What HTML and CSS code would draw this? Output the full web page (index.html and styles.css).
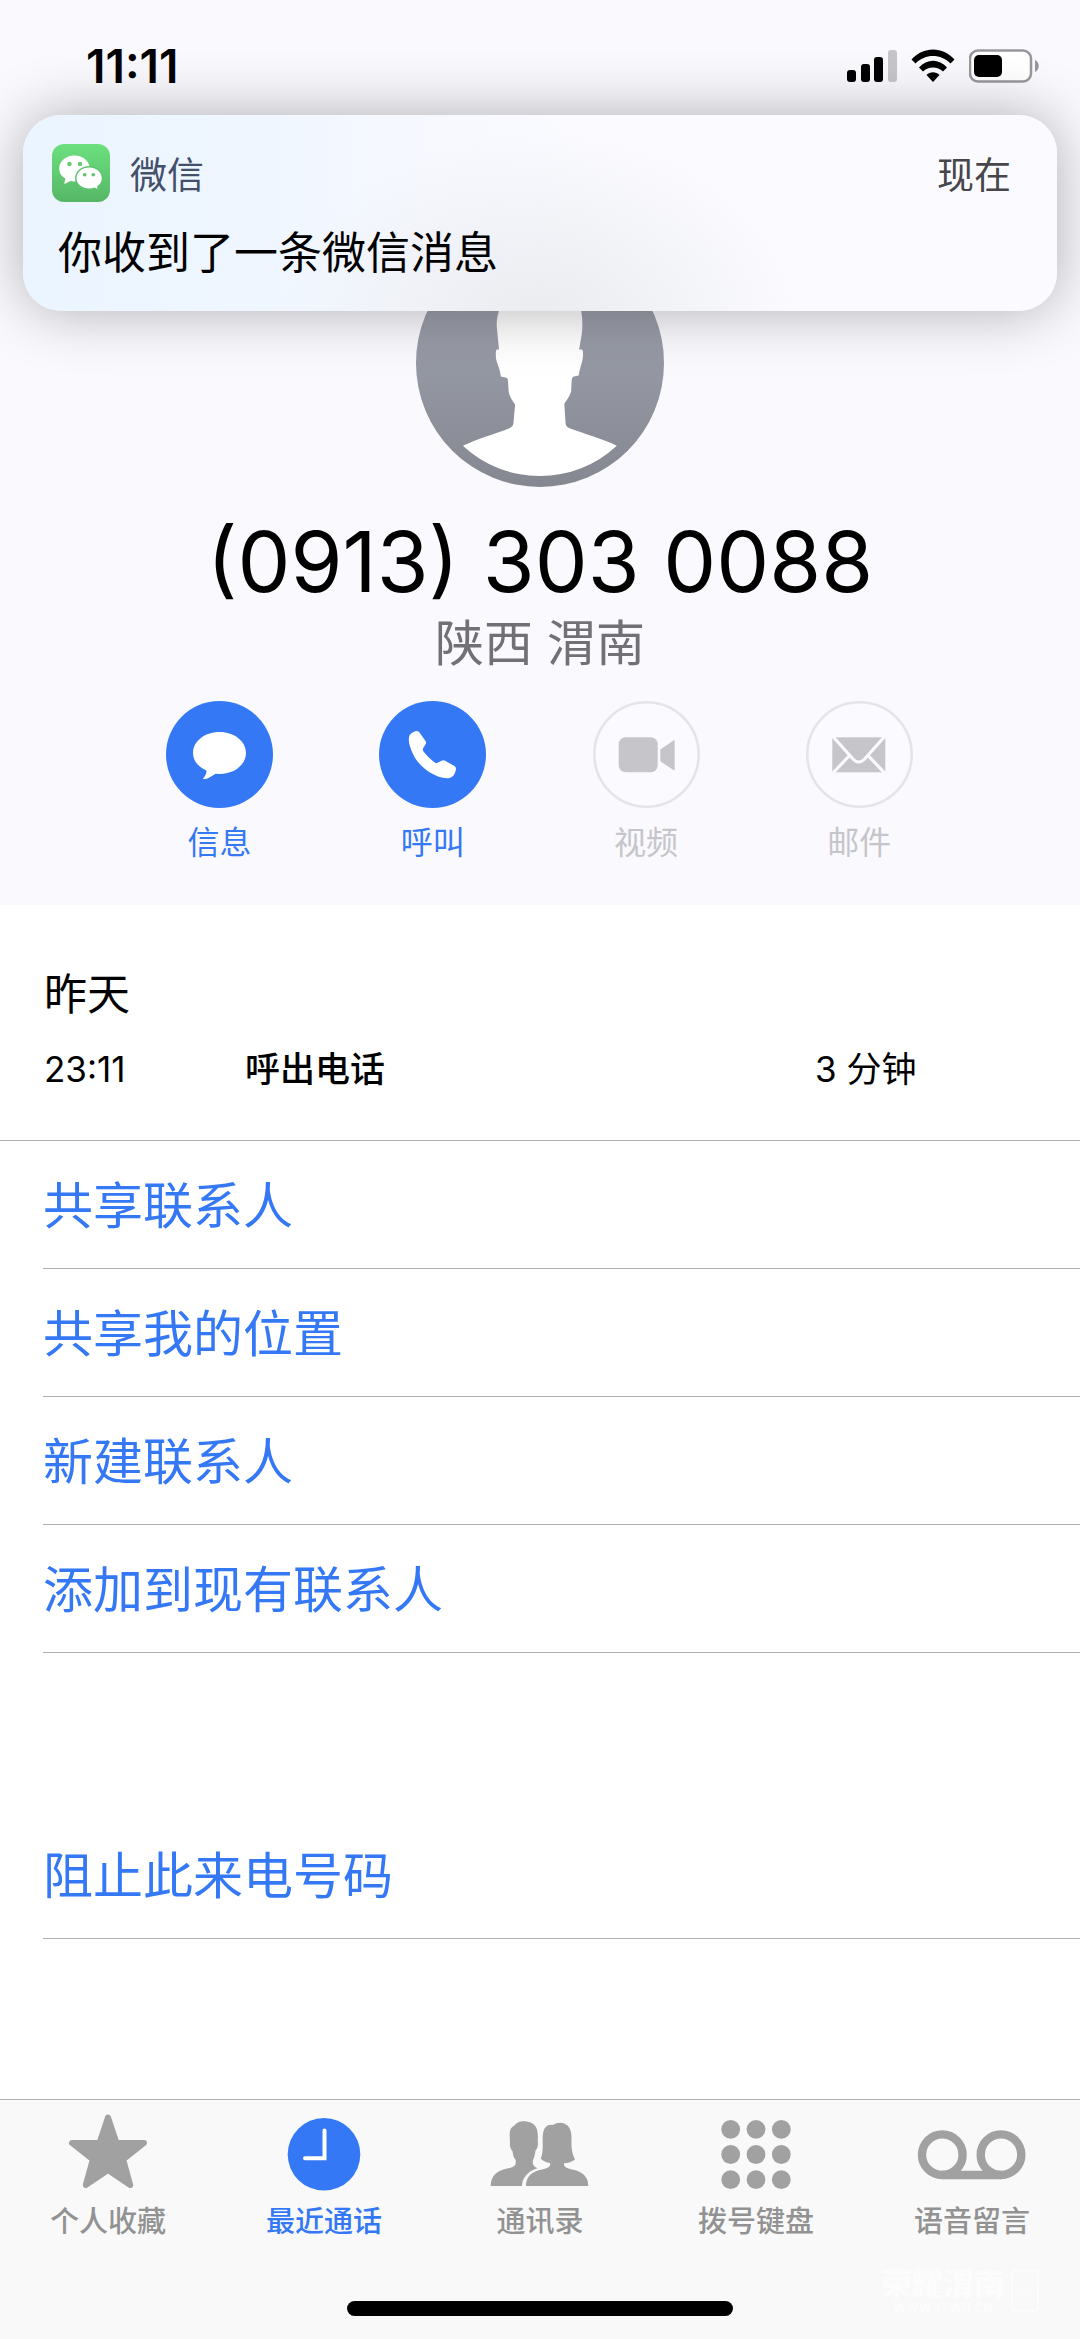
FILE: index.html
```html
<!DOCTYPE html>
<html lang="zh-CN">
<head>
    <meta charset="UTF-8">
    <meta name="viewport" content="width=device-width, initial-scale=1.0">
    <title>最近通话</title>
    <link rel="stylesheet" href="styles.css">
</head>
<body>
    <div class="phone">
        <header class="contact-header">
            <div class="status-bar">
                <span class="status-time">11:11</span>
                <div class="status-icons">
                    <svg width="50" height="34" viewBox="0 0 50 34" aria-hidden="true">
                        <rect x="0" y="21" width="9" height="12" rx="3"/>
                        <rect x="14" y="15" width="9" height="18" rx="3"/>
                        <rect x="27" y="8" width="9" height="25" rx="3"/>
                        <rect x="41" y="1" width="9" height="32" rx="3" fill="#c6c5ca"/>
                    </svg>
                    <svg width="44" height="34" viewBox="0 0 44 34" aria-hidden="true">
                        <path d="M0.500 10.500C12-3 32-3 43.500 10.500L39.500 14.500C30 4.500 14 4.500 4.500 14.500Z"/>
                        <path d="M8 18.500C16 9.500 28 9.500 36 18.500L32 22.500C26.500 17 17.500 17 12 22.500Z"/>
                        <path d="M15.500 26C19 22.300 25 22.300 28.500 26L22 33Z"/>
                    </svg>
                    <svg width="70" height="34" viewBox="0 0 70 34" aria-hidden="true">
                        <rect x="1" y="1.500" width="61" height="31" rx="8" fill="#fff" stroke="#98979c" stroke-width="2.500"/>
                        <rect x="5" y="6" width="28" height="22" rx="5"/>
                        <path d="M66 11C71 13 71 21 66 23Z" fill="#98979c"/>
                    </svg>
                </div>
            </div>

            <svg class="avatar" viewBox="0 0 247 247" aria-hidden="true">
                <defs>
                    <linearGradient id="avatarFill" x1="0" y1="0" x2="0" y2="1">
                        <stop offset="0" stop-color="#a5a9b5"/>
                        <stop offset="1" stop-color="#858891"/>
                    </linearGradient>
                </defs>
                <circle cx="123.500" cy="123.500" r="123.500" fill="url(#avatarFill)"/>
                <path fill="#fff" d="M82.700 71C85 40 100 26 123.500 26S162 40 164.300 71C166 78 166 88 165 95L162.500 110L165.500 110Q167 112 166 119C165 125 163 129 162 136L157 137Q155 138 155 141L154.500 152C153 157 150 161 147.700 164L149 184Q149.500 187 153 188.500C167 194 187 199 200 206A112.800 112.800 0 0 1 46.700 206C60 199 80 194 94 188Q96.500 187 97 184L98.700 165C96 161 93 157 92.300 152L91.500 140Q91 138 89 138L84.500 137C84 130 80.500 124 79.700 119Q79 111 80.500 110L82.700 110L80.500 88C80 80 81.500 76 82.700 71Z"/>
            </svg>

            <h1 class="phone-number">(0913) 303 0088</h1>
            <p class="location">陕西 渭南</p>

            <div class="actions">
                <button class="action">
                    <svg class="action-icon" viewBox="0 0 107 107" aria-hidden="true">
                        <circle cx="53.500" cy="53.500" r="53.500" fill="#3478f6"/>
                        <path fill="#fff" d="M53.500 31C68.500 31 80 40.500 80 52S68.500 73 53.500 73L49.500 72.700C46 75 42 78 37.500 78.200Q36.500 78 37.500 77C40 74 40.500 72 40.500 69.500C32 66 27 59.500 27 52C27 40.500 38.500 31 53.500 31Z"/>
                    </svg>
                    <span>信息</span>
                </button>
                <button class="action">
                    <svg class="action-icon" viewBox="0 0 107 107" aria-hidden="true">
                        <circle cx="53.500" cy="53.500" r="53.500" fill="#3478f6"/>
                        <path fill="#fff" d="M30.500 34.500C32 31.500 36 30 38 30Q39.500 30 40.500 31.500L46.500 40Q47.500 41.500 46.700 43L44 47.500Q43.500 49 44.500 50.500C48 55 52 59 56.500 62Q57.500 62.500 59 61.500L62.500 59.700Q64.500 58.800 66.500 60L75.500 65Q77.500 66.500 76.800 69C76 74 73 77 69 77.300C63 77.500 57 75 51 71.500C44 67 38 61 34.500 54C31 47 28.500 40 30.500 34.500Z"/>
                    </svg>
                    <span>呼叫</span>
                </button>
                <button class="action" disabled>
                    <svg class="action-icon" viewBox="0 0 107 107" aria-hidden="true">
                        <circle cx="53.500" cy="53.500" r="52.200" fill="#fbfafe" stroke="#e5e4e9" stroke-width="2.600"/>
                        <rect x="25.700" y="36.300" width="39" height="35" rx="7" fill="#c6c5ca"/>
                        <path fill="#c6c5ca" d="M67.300 48.500L80.500 39.500Q81.700 39 81.700 40V68.500Q81.700 69.500 80.500 69L69 61.500Q67.300 60.500 67.300 59Z"/>
                    </svg>
                    <span>视频</span>
                </button>
                <button class="action" disabled>
                    <svg class="action-icon" viewBox="0 0 107 107" aria-hidden="true">
                        <circle cx="53.500" cy="53.500" r="52.200" fill="#fbfafe" stroke="#e5e4e9" stroke-width="2.600"/>
                        <rect x="26.300" y="36.300" width="53" height="35" fill="#c6c5ca"/>
                        <path fill="none" stroke="#fbfafe" stroke-width="3.200" d="M26 34.500L47 58Q52.800 64 58.600 58L79.600 34.500M43.500 54.500L26 73M62 54.500L79.600 73"/>
                    </svg>
                    <span>邮件</span>
                </button>
            </div>
        </header>

        <main>
            <section class="call-log">
                <h2>昨天</h2>
                <table class="call-table">
                    <tbody>
                        <tr>
                            <td class="call-time">23:11</td>
                            <th class="call-type" scope="row">呼出电话</th>
                            <td class="call-duration">3 分钟</td>
                        </tr>
                    </tbody>
                </table>
            </section>

            <div class="option-list">
                <button class="option">共享联系人</button>
                <button class="option">共享我的位置</button>
                <button class="option">新建联系人</button>
                <button class="option">添加到现有联系人</button>
            </div>
            <div class="option-list">
                <button class="option">阻止此来电号码</button>
            </div>
        </main>

        <footer class="bottom-bar">
            <nav class="tabs">
                <a class="tab" href="#favorites">
                    <svg class="tab-icon" viewBox="0 0 110 80" aria-hidden="true">
                        <path fill="currentColor" stroke="currentColor" stroke-width="6" stroke-linejoin="round" d="M55 5.500L63.500 31H91L70.200 47.500L77.200 73L55 58L32.800 73L39.800 47.500L19 31H46.500Z"/>
                    </svg>
                    <span>个人收藏</span>
                </a>
                <a class="tab tab-active" href="#recents">
                    <svg class="tab-icon" viewBox="0 0 110 80" aria-hidden="true">
                        <circle cx="55" cy="42.300" r="36.300" fill="currentColor"/>
                        <path fill="none" stroke="#fff" stroke-width="4" stroke-linecap="round" d="M55.500 18.500V46.300H36"/>
                    </svg>
                    <span>最近通话</span>
                </a>
                <a class="tab" href="#contacts">
                    <svg class="tab-icon" viewBox="0 0 110 80" aria-hidden="true">
                        <path fill="currentColor" d="M5.700 74C5.700 64 12 58.500 22 56.500C28 55.500 30.500 54 30.700 51V48C28 45 28 42 27.500 39C25.500 37 24.500 34 25 30C24.500 22 24 16 29 14C33 8 41 8.500 45.500 10.500C52 13 53.500 19 52.700 29C53.500 33 52.500 37 50.500 38.500C50 43 49 46 48 48L47.700 50C48 54 50 55 52.500 56.200C43 59 37 66 37 74Z"/>
                        <path fill="currentColor" d="M41 74C41 64 47 59.500 57 57.500C63 56 65.500 55 65.200 51C61 50.500 58 49 55.700 46.500C58.500 41 57.500 31 57.700 25C58 17 61 12 68 13C73 9.500 79 10 83 14C87 18 86.500 26 86.500 32C86.500 39 88 43 90 47.500C87 50 83 51 79 51.300C78.500 55 82 56.500 87 57.500C97 59.500 103.300 64 103.300 74Z"/>
                    </svg>
                    <span>通讯录</span>
                </a>
                <a class="tab" href="#keypad">
                    <svg class="tab-icon" viewBox="0 0 110 80" aria-hidden="true">
                        <g fill="currentColor">
                            <circle cx="29.700" cy="17.300" r="9.400"/>
                            <circle cx="55" cy="17.300" r="9.400"/>
                            <circle cx="80.300" cy="17.300" r="9.400"/>
                            <circle cx="29.700" cy="42.500" r="9.400"/>
                            <circle cx="55" cy="42.500" r="9.400"/>
                            <circle cx="80.300" cy="42.500" r="9.400"/>
                            <circle cx="29.700" cy="67.700" r="9.400"/>
                            <circle cx="55" cy="67.700" r="9.400"/>
                            <circle cx="80.300" cy="67.700" r="9.400"/>
                        </g>
                    </svg>
                    <span>拨号键盘</span>
                </a>
                <a class="tab" href="#voicemail">
                    <svg class="tab-icon" viewBox="0 0 110 80" aria-hidden="true">
                        <g fill="none" stroke="currentColor" stroke-width="8.400">
                            <circle cx="25.300" cy="42.700" r="20.300"/>
                            <circle cx="84" cy="42.700" r="20.300"/>
                            <path d="M25.300 63H84"/>
                        </g>
                    </svg>
                    <span>语音留言</span>
                </a>
            </nav>
            <div class="home-indicator"></div>
            <div class="watermark">
                <div>
                    <p class="watermark-name">荣耀渭南</p>
                    <p class="watermark-url">WWW.YEWN.CN</p>
                </div>
                <span class="watermark-app">APP</span>
            </div>
        </footer>

        <!-- Incoming message banner, lies over the header -->
        <aside class="banner">
            <div class="banner-top">
                <svg class="banner-icon" viewBox="0 0 58 58" aria-hidden="true">
                    <defs>
                        <linearGradient id="wechatFill" x1="0" y1="0" x2="0" y2="1">
                            <stop offset="0" stop-color="#6ce07e"/>
                            <stop offset="1" stop-color="#56b766"/>
                        </linearGradient>
                    </defs>
                    <rect width="58" height="58" rx="12" fill="url(#wechatFill)"/>
                    <path fill="#fff" d="M22.500 11.500C31 11.500 37.700 17.300 37.700 24.500S31 37.500 22.500 37.500L18.500 37L13 39.700Q12 39.700 12.300 38.700L13.500 34.700C9.500 32.500 7.200 28.800 7.200 24.500C7.200 17.300 14 11.500 22.500 11.500Z"/>
                    <circle cx="17.500" cy="20" r="2.200" fill="#64cb75"/>
                    <circle cx="28" cy="20" r="2.200" fill="#64cb75"/>
                    <path fill="#fff" stroke="#60c270" stroke-width="1.500" d="M37.200 22.700C44.500 22.700 50.500 27.800 50.500 34.200C50.500 37.600 48.700 40.600 45.800 42.700L46.800 46L42 44.400C40.500 45 39 45.200 37.200 45.200C29.800 45.200 23.800 40.500 23.800 34.200C23.800 27.800 29.800 22.700 37.200 22.700Z"/>
                    <circle cx="32.700" cy="30.800" r="1.800" fill="#60c270"/>
                    <circle cx="41.300" cy="30.800" r="1.800" fill="#60c270"/>
                </svg>
                <span class="banner-app">微信</span>
                <span class="banner-when">现在</span>
            </div>
            <p class="banner-message">你收到了一条微信消息</p>
        </aside>
    </div>
</body>
</html>
```

FILE: styles.css
```css
* {
    box-sizing: border-box;
}
body {
    margin: 0;
    font-family: Inter, "Noto Sans CJK SC", sans-serif;
    color: #000;
    background: #fff;
}
h1, h2, p {
    margin: 0;
    font-weight: 400;
}
button {
    font: inherit;
    border: 0;
    padding: 0;
    background: none;
    cursor: pointer;
}
svg {
    display: block;
}
.phone {
    position: relative;
    display: flex;
    flex-direction: column;
    min-height: 100vh;
}

/* Header */
.contact-header {
    display: flex;
    flex-direction: column;
    align-items: center;
    padding-bottom: 42px;
    background: #faf9fe;
}
.status-bar {
    display: flex;
    justify-content: space-between;
    align-items: center;
    width: 100%;
    padding: 40px 41px 40px 86px;
}
.status-time {
    font-size: 46px;
    line-height: 52px;
    font-weight: 600;
}
.status-icons {
    display: flex;
    gap: 14px;
}
.avatar {
    width: 248px;
    height: 248px;
    margin-top: 107px;
}
.phone-number {
    margin-top: 24px;
    font-size: 84px;
    line-height: 102px;
}
.location {
    font-size: 49px;
    line-height: 62px;
    color: #717075;
}
.actions {
    display: grid;
    grid-template-columns: repeat(4, 1fr);
    width: 100%;
    margin-top: 26px;
    padding: 0 114px 0 113px;
}
.action {
    display: flex;
    flex-direction: column;
    align-items: center;
    gap: 15px;
    font-size: 32px;
    line-height: 40px;
    color: #3478f6;
}
.action:disabled {
    color: #c6c5ca;
    cursor: default;
}
.action-icon {
    width: 107px;
    height: 107px;
}

/* Call details */
.call-log {
    padding: 59px 0 46px 44px;
    border-bottom: 1px solid #b2b2b5;
}
.call-log h2 {
    font-size: 43px;
    line-height: 60px;
}
.call-table {
    width: 100%;
    margin-top: 20px;
    border-collapse: collapse;
    table-layout: fixed;
    font-size: 35px;
    line-height: 50px;
    text-align: left;
}
.call-table td, .call-table th {
    padding: 0;
}
.call-time {
    width: 201px;
}
.call-table .call-type {
    font-weight: 500;
}
.call-duration {
    width: 265px;
}

/* Option rows */
.option-list {
    padding-left: 43px;
}
.option-list + .option-list {
    margin-top: 158px;
}
.option {
    display: block;
    width: 100%;
    height: 128px;
    padding-top: 2px;
    border-bottom: 1px solid #b2b2b5;
    font-size: 50px;
    line-height: 60px;
    text-align: left;
    color: #3478f6;
}

/* Bottom bar */
.bottom-bar {
    position: relative;
    display: flex;
    flex-direction: column;
    align-items: center;
    margin-top: auto;
    padding-bottom: 23px;
    border-top: 1px solid #b2b2b2;
    background: #f9f9f9;
}
.tabs {
    display: grid;
    grid-template-columns: repeat(5, 1fr);
    width: 100%;
    padding-top: 12px;
}
.tab {
    display: flex;
    flex-direction: column;
    align-items: center;
    gap: 12px;
    font-size: 29px;
    line-height: 36px;
    font-weight: 500;
    color: #929292;
    text-decoration: none;
}
.tab-icon {
    width: 110px;
    height: 80px;
    color: #a1a1a1;
}
.tab-active, .tab-active .tab-icon {
    color: #3478f6;
}
.home-indicator {
    width: 386px;
    height: 15px;
    margin-top: 61px;
    border-radius: 8px;
    background: #000;
}
.watermark {
    position: absolute;
    right: 41px;
    bottom: 24px;
    display: flex;
    align-items: center;
    gap: 6px;
    color: #fcfcfc;
}
.watermark-name {
    font-size: 31px;
    line-height: 34px;
    font-weight: 900;
}
.watermark-url {
    font-size: 12px;
    line-height: 14px;
    font-weight: 700;
    text-align: center;
}
.watermark-app {
    width: 28px;
    height: 42px;
    border: 2px solid #fcfcfc;
    border-radius: 4px;
    font-size: 10px;
    line-height: 38px;
    text-align: center;
}

/* Notification banner */
.banner {
    position: absolute;
    top: 115px;
    left: 23px;
    right: 23px;
    padding: 29px 46px 31px 29px;
    border-radius: 38px;
    background:
        radial-gradient(ellipse 260px 200px at 50% 110%, #e9ebef, rgba(233, 235, 239, 0)),
        linear-gradient(90deg, #ebf5ff, #eff6ff 22%, #f8f9ff 42%, #fbfbff 60%);
    box-shadow: 0 0 60px rgba(0, 0, 0, 0.3);
    font-family: "Noto Sans CJK SC", sans-serif;
}
.banner-top {
    display: flex;
    align-items: center;
    font-size: 37px;
    line-height: 58px;
}
.banner-icon {
    width: 58px;
    height: 58px;
}
.banner-app {
    margin-left: 20px;
    color: #44506a;
}
.banner-when {
    margin-left: auto;
    color: #46464b;
}
.banner-message {
    margin-top: 18px;
    padding-left: 6px;
    font-size: 44px;
    line-height: 60px;
}
```
